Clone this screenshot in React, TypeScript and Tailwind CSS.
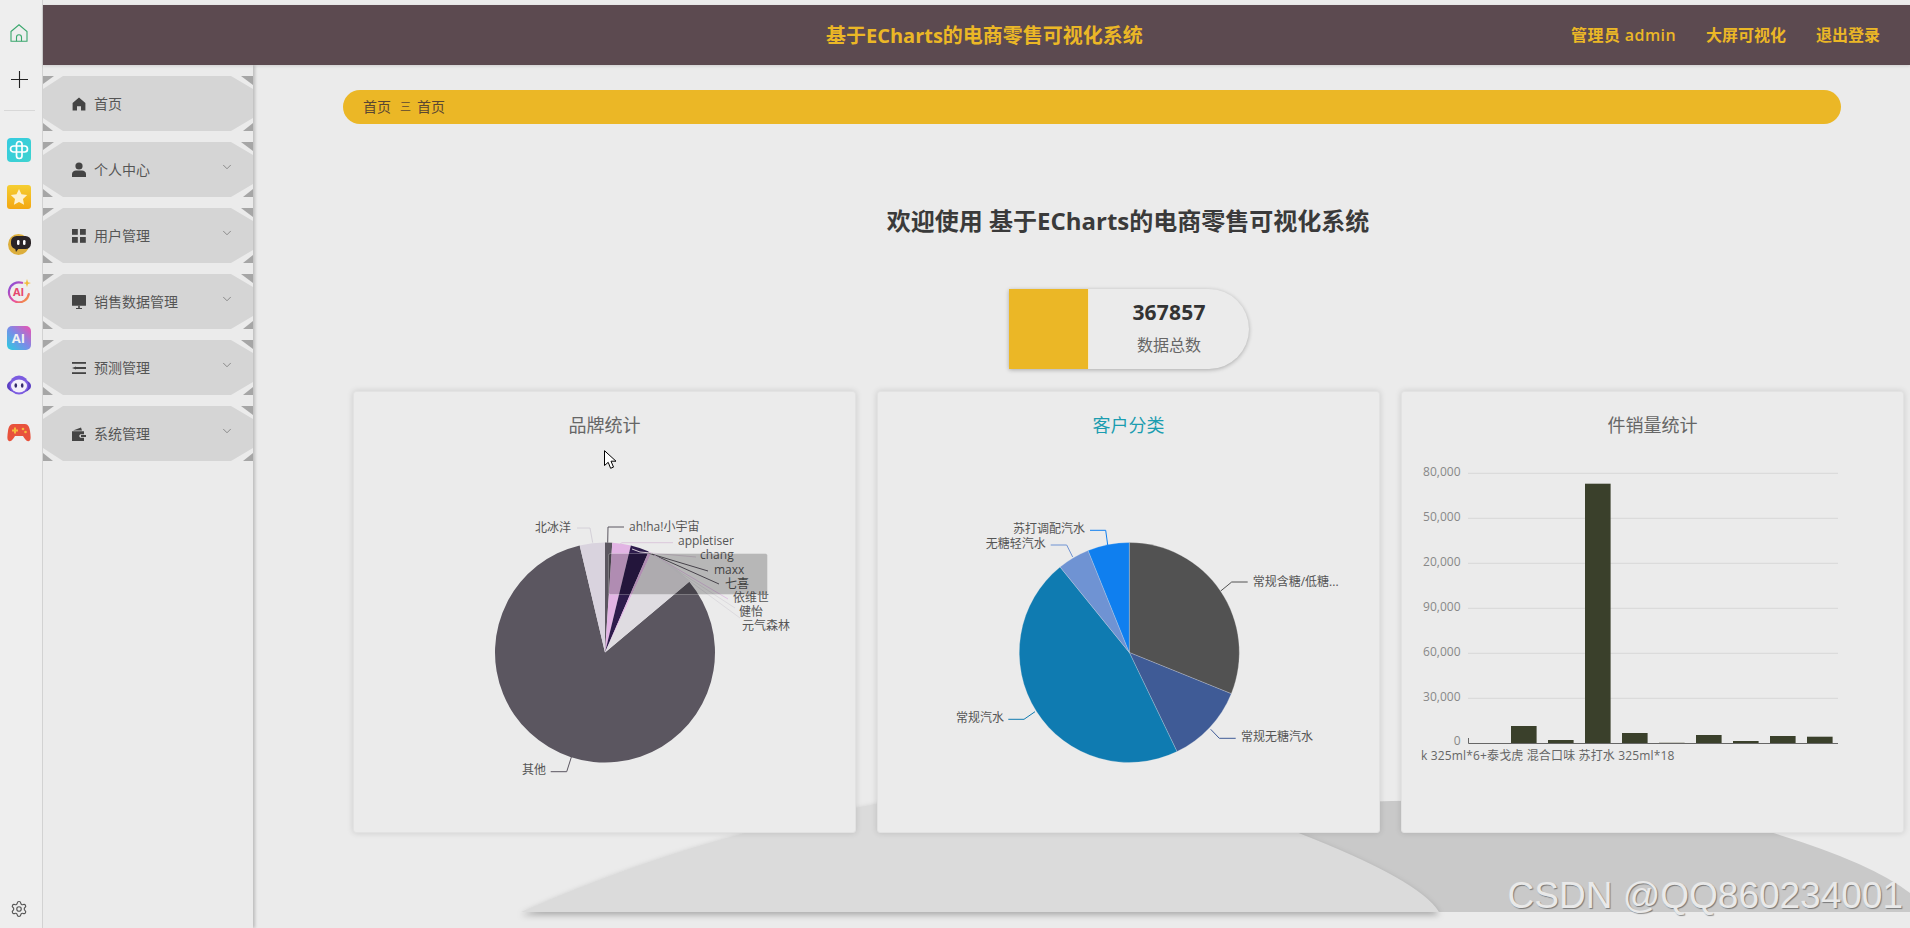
import { ChevronDown, Settings } from "lucide-react"

const yellow = "#ebb726"

// clockwise degrees from 12 o'clock
function slice(cx: number, cy: number, r: number, from: number, to: number) {
  const p = (a: number) => {
    const t = (a * Math.PI) / 180
    return `${(cx + r * Math.sin(t)).toFixed(2)} ${(cy - r * Math.cos(t)).toFixed(2)}`
  }
  const large = to - from > 180 ? 1 : 0
  return `M${cx} ${cy} L${p(from)} A${r} ${r} 0 ${large} 1 ${p(to)} Z`
}

function HomeIcon() {
  return (
    <svg width="14" height="14" viewBox="0 0 14 14" fill="#444">
      <path d="M7 .6 13.4 6v7.4H9V9.2H5v4.2H.6V6z" />
    </svg>
  )
}
function UserIcon() {
  return (
    <svg width="14" height="15" viewBox="0 0 14 15" fill="#444">
      <circle cx="7" cy="4" r="3.6" />
      <path d="M0 15v-3c0-2 2-3.5 4-3.5h6c2 0 4 1.5 4 3.5v3z" />
    </svg>
  )
}
function GridIcon() {
  return (
    <svg width="14" height="14" viewBox="0 0 14 14" fill="#444">
      <rect x="0" y="0" width="5.8" height="5.8" />
      <rect x="8" y="0" width="5.8" height="5.8" />
      <rect x="0" y="8" width="5.8" height="5.8" />
      <rect x="8" y="8" width="5.8" height="5.8" />
    </svg>
  )
}
function MonitorIcon() {
  return (
    <svg width="14" height="14" viewBox="0 0 14 14" fill="#444">
      <rect x="0" y="0" width="14" height="10.8" rx=".5" />
      <path d="M4 13h6v.9H4zM6.2 10.8h1.6V13H6.2z" />
    </svg>
  )
}
function ListIcon() {
  return (
    <svg width="14" height="12" viewBox="0 0 14 12" fill="#444">
      <rect x="0" y="0" width="14" height="1.8" />
      <path d="M0 6 4 4.600V5.100h10v1.800H4v.5z" />
      <rect x="0" y="10.200" width="14" height="1.800" />
    </svg>
  )
}
function WalletIcon() {
  return (
    <svg width="14" height="14" viewBox="0 0 14 14" fill="#444">
      <path d="M1 3.600 9 .6l1 3H1zM0 4.200h12v3H8.400a2 2 0 0 0 0 3.600H12V14H0z" />
      <rect x="9" y="8" width="5" height="2" />
    </svg>
  )
}

const menu = [
  { label: "首页", icon: <HomeIcon />, arrow: false },
  { label: "个人中心", icon: <UserIcon />, arrow: true },
  { label: "用户管理", icon: <GridIcon />, arrow: true },
  { label: "销售数据管理", icon: <MonitorIcon />, arrow: true },
  { label: "预测管理", icon: <ListIcon />, arrow: true },
  { label: "系统管理", icon: <WalletIcon />, arrow: true },
]

function MenuItem({ item }: { item: (typeof menu)[number] }) {
  return (
    <div className="relative h-[55px] w-[210px]">
      <span className="absolute left-0 top-0 h-[8px] w-[11px] bg-[#a6a6a6] [clip-path:polygon(0_0,100%_0,0_100%)]" />
      <span className="absolute right-0 top-0 h-[9px] w-[12px] bg-[#a6a6a6] [clip-path:polygon(0_0,100%_0,100%_100%)]" />
      <span className="absolute bottom-0 left-0 h-[8px] w-[10px] bg-[#a6a6a6] [clip-path:polygon(0_0,100%_100%,0_100%)]" />
      <span className="absolute bottom-0 right-0 h-[8px] w-[10px] bg-[#a6a6a6] [clip-path:polygon(100%_0,100%_100%,0_100%)]" />
      <div className="flex h-full items-center bg-[#d5d5d5] pl-[29px] pr-[19px] text-sm text-[#555] [clip-path:polygon(20px_0,188px_0,210px_13px,210px_42px,188px_55px,20px_55px,0_42px,0_13px)]">
        <span className="flex w-[22px] shrink-0 items-center">{item.icon}</span>
        <span>{item.label}</span>
        {item.arrow && <ChevronDown size={14} strokeWidth={1} className="ml-auto -mt-[5px] text-[#555]" />}
      </div>
    </div>
  )
}

function RailIcons() {
  return (
    <>
      <svg width="24" height="24" viewBox="0 0 24 24">
        <defs>
          <linearGradient id="a1" x1="0" y1="0" x2="1" y2="1">
            <stop offset="0" stopColor="#35cbe0" />
            <stop offset="1" stopColor="#3ed3cf" />
          </linearGradient>
        </defs>
        <rect width="24" height="24" rx="4" fill="url(#a1)" />
        <g fill="none" stroke="#fff" strokeWidth="1.7">
          <rect x="3.5" y="8" width="17" height="6" rx="3" />
          <rect x="9.5" y="3.5" width="5.5" height="17" rx="2.7" />
        </g>
      </svg>
      <svg width="24" height="24" viewBox="0 0 24 24">
        <defs>
          <linearGradient id="a2" x1="0" y1="0" x2="0" y2="1">
            <stop offset="0" stopColor="#f5ce32" />
            <stop offset="1" stopColor="#f3a712" />
          </linearGradient>
        </defs>
        <rect width="24" height="24" rx="3" fill="url(#a2)" />
        <path d="m12 4 2.5 5.3 5.7.7-4.200 4 1.100 5.800-5.100-2.900-5.100 2.900L8 14 3.800 10l5.700-.7z" fill="#fdf1cf" />
      </svg>
      <svg width="24" height="24" viewBox="0 0 24 24">
        <circle cx="11.500" cy="12.500" r="10.500" fill="#dcae3c" />
        <rect x="4" y="4" width="20" height="13" rx="5.500" fill="#2b2527" />
        <path d="m8 16 4 0-3 4z" fill="#2b2527" />
        <rect x="10" y="8" width="2.500" height="5" rx="1.200" fill="#fff" />
        <rect x="16" y="8" width="2.500" height="5" rx="1.200" fill="#fff" />
      </svg>
      <svg width="24" height="24" viewBox="0 0 24 24">
        <defs>
          <linearGradient id="a4" x1="0" y1="0" x2="1" y2="1">
            <stop offset="0" stopColor="#7c4fe0" />
            <stop offset=".6" stopColor="#ea4fa0" />
            <stop offset="1" stopColor="#f5a623" />
          </linearGradient>
        </defs>
        <path d="M15 3.800A10 10 0 1 0 21.800 15" fill="none" stroke="url(#a4)" strokeWidth="2.200" strokeLinecap="round" />
        <text x="11.500" y="16.500" textAnchor="middle" fontSize="11" fontWeight="700" fill="#e6476f">AI</text>
        <path d="m20 0 1 3.200L24 4l-3 .9-1 3.100-1-3.100L16 4l3-.8z" fill="#f3bb3a" />
      </svg>
      <svg width="24" height="24" viewBox="0 0 24 24">
        <defs>
          <linearGradient id="a5" x1="1" y1="0" x2="0" y2="1">
            <stop offset="0" stopColor="#ef4fb0" />
            <stop offset=".5" stopColor="#7a8ce8" />
            <stop offset="1" stopColor="#27cfe0" />
          </linearGradient>
        </defs>
        <rect width="24" height="24" rx="5" fill="url(#a5)" />
        <text x="11.500" y="17" textAnchor="middle" fontSize="13" fontWeight="700" fill="#f2f2f2">AI</text>
      </svg>
      <svg width="24" height="24" viewBox="0 0 24 24">
        <ellipse cx="12" cy="13" rx="12" ry="7" fill="#5b3fc4" />
        <circle cx="12" cy="12" r="9.500" fill="#7c5ce0" />
        <ellipse cx="12" cy="13" rx="8" ry="6.500" fill="#f3effa" />
        <ellipse cx="8.800" cy="12.500" rx="1.300" ry="2.200" fill="#34296b" />
        <ellipse cx="15.200" cy="12.500" rx="1.300" ry="2.200" fill="#34296b" />
      </svg>
      <svg width="24" height="24" viewBox="0 0 24 24">
        <path d="M6 4h12c3 0 4.500 3 5 7s1.500 9-1 10-4-2-6-5H8c-2 3-3.500 6-6 5s-1.500-6-1-10 2-7 5-7z" fill="#e8523c" />
        <path d="M5 9.500h2V7.500h2v2h2v2H9v2H7v-2H5z" fill="#f6b93b" />
        <circle cx="16" cy="9" r="1.300" fill="#f6b93b" />
        <circle cx="18.500" cy="12" r="1.300" fill="#f6b93b" />
      </svg>
    </>
  )
}

function Card({ title, active, children }: { title: string; active?: boolean; children: React.ReactNode }) {
  return (
    <div className="flex h-[442px] w-[503px] flex-col rounded-[3px] border border-[#e2e2e2] bg-[#ebebeb] shadow-[0_0_6px_rgba(0,0,0,0.14)]">
      <div className={`pt-[20px] text-center text-[18px] leading-[26px] ${active ? "text-[#1b9db0]" : "text-[#666]"}`}>{title}</div>
      {children}
    </div>
  )
}

const brandLabels: { text: string; x: number; y: number; line: string; color: string }[] = [
  { text: "北冰洋", x: 535, y: 527, line: "577,527 590,527 592.7,541.7", color: "#d4d0d8" },
  { text: "ah!ha!小宇宙", x: 629, y: 526, line: "624,526 608,526 607.7,541.7", color: "#5b5660" },
  { text: "appletiser", x: 678, y: 540, line: "673,541.7 622,541.7 620,543", color: "#dcc8dc" },
  { text: "chang", x: 700, y: 554, line: "696,556 640,551 632,548", color: "#d8cdd8" },
  { text: "maxx", x: 714, y: 569, line: "708,570 648,552", color: "#5b5660" },
  { text: "七喜", x: 725, y: 583, line: "719,583 652,553", color: "#5b5660" },
  { text: "依维世", x: 733, y: 597, line: "728,598 654,554", color: "#e0c4e4" },
  { text: "健怡", x: 739, y: 611, line: "735,607 655,555", color: "#dcdade" },
  { text: "元气森林", x: 742, y: 625, line: "740,617 657,556", color: "#dcdade" },
  { text: "其他", x: 522, y: 769, line: "550.7,770.7 566.7,770.7 571.7,755", color: "#5b5660" },
]

function BrandPie() {
  const c = [605, 651.5, 110] as const
  return (
    <svg className="block" width="501" height="393" viewBox="354 437 501 393" fontSize="12">
      <path d={slice(c[0], c[1], c[2], 50, 346.7)} fill="#5b5660" />
      <path d={slice(c[0], c[1], c[2], 346.7, 360)} fill="#d9d3de" />
      <path d={slice(c[0], c[1], c[2], 0, 3.8)} fill="#5b5660" />
      <path d={slice(c[0], c[1], c[2], 3.8, 13.6)} fill="#e2b4e4" />
      <path d={slice(c[0], c[1], c[2], 13.6, 23.4)} fill="#2e1c4c" />
      <path d={slice(c[0], c[1], c[2], 23.4, 25)} fill="#e2b4e4" />
      <path d={slice(c[0], c[1], c[2], 25, 50)} fill="#dfdce1" />
      {brandLabels.map((l) => (
        <g key={l.text}>
          <polyline points={l.line} fill="none" stroke={l.color} />
          <text x={l.x} y={l.y + 4} fill="#555">{l.text}</text>
        </g>
      ))}
      <rect x="608.500" y="552.500" width="159" height="41" rx="2" fill="rgba(0,0,0,0.22)" stroke="rgba(255,255,255,0.25)" />
    </svg>
  )
}

const kindSlices = [
  { from: 0, to: 112, color: "#525252" },
  { from: 112, to: 154.3, color: "#3f5b96" },
  { from: 154.3, to: 321, color: "#0f7bb1" },
  { from: 321, to: 338, color: "#6f93d3" },
  { from: 338, to: 360, color: "#0f7fef" },
]
const kindLabels = [
  { text: "常规含糖/低糖...", x: 1252.7, y: 581, line: "1220.7,590 1231.7,581 1247.7,581", color: "#525252" },
  { text: "常规无糖汽水", x: 1241, y: 736, line: "1210.7,728.3 1219.3,737.3 1235.7,737.3", color: "#3f5b96" },
  { text: "常规汽水", x: 956, y: 717, line: "1035,710.7 1024,718.3 1008.3,718.3", color: "#0f7bb1" },
  { text: "无糖轻汽水", x: 985.7, y: 543, line: "1072.7,556 1066.7,544 1050.7,544", color: "#6f93d3" },
  { text: "苏打调配汽水", x: 1013, y: 528, line: "1107.7,544 1105.7,529.3 1090,529.3", color: "#0f7fef" },
]

function KindPie() {
  return (
    <svg className="block" width="501" height="393" viewBox="878 437 501 393" fontSize="12" overflow="visible">
      {kindSlices.map((s) => (
        <path key={s.from} d={slice(1129.3, 651.5, 110, s.from, s.to)} fill={s.color} stroke="#ebebeb" strokeWidth="0.25" />
      ))}
      {kindLabels.map((l) => (
        <g key={l.text}>
          <polyline points={l.line} fill="none" stroke={l.color} />
          <text x={l.x} y={l.y + 4} fill="#555">{l.text}</text>
        </g>
      ))}
    </svg>
  )
}

const ticks = [
  { label: "80,000", y: 472.3 },
  { label: "50,000", y: 517.3 },
  { label: "20,000", y: 562.3 },
  { label: "90,000", y: 607.3 },
  { label: "60,000", y: 652.3 },
  { label: "30,000", y: 697.3 },
]
const barTops = [742, 725, 739, 482.7, 732, 741, 734, 740, 735, 735.7]

function SalesBars() {
  return (
    <svg className="block" width="501" height="393" viewBox="1402 437 501 393" fontSize="12" overflow="visible">
      {ticks.map((t) => (
        <g key={t.label}>
          <line x1="1468" x2="1838" y1={t.y} y2={t.y} stroke="#d8d8d8" />
          <text x="1460.500" y={t.y + 3} textAnchor="end" fill="#888">{t.label}</text>
        </g>
      ))}
      {barTops.map((top, i) => (
        <rect key={i} x={1474 + i * 37} y={top} width="25.600" height={742 - top} fill={i === 5 ? "#c4c4bc" : "#3a402b"} />
      ))}
      <path d="M1468.500 737V742.500H1838" fill="none" stroke="#666" />
      <text x="1460.500" y="744" textAnchor="end" fill="#888">0</text>
      <text x="1421" y="759" fill="#666" letterSpacing="0.15">k 325ml*6+泰戈虎 混合口味 苏打水 325ml*18</text>
    </svg>
  )
}

export default function App() {
  return (
    <div className="relative flex h-screen w-full overflow-hidden bg-[#ebebeb] font-['Open_Sans','Noto_Sans_CJK_SC',sans-serif]">
      {/* app rail */}
      <aside className="z-20 flex w-[43px] shrink-0 flex-col items-center border-r border-[#d2d2d2] bg-[#eeeeee] pr-[4px] pt-[24px] pb-[10px]">
        <svg width="18" height="18" viewBox="0 0 18 18" fill="none" stroke="#3aa76d" strokeWidth="1.100">
          <path d="M1 7.500 9 .8l8 6.700v9.700H1z" />
          <path d="M6.500 17.200v-4a2.500 2.500 0 0 1 5 0v4" />
        </svg>
        <svg className="mt-[29px]" width="17" height="17" viewBox="0 0 17 17" stroke="#222" strokeWidth="1.100">
          <path d="M0 8.500h17M8.500 0v17" />
        </svg>
        <div className="mt-[22px] h-px w-[31px] bg-[#d8d8d8]" />
        <div className="mt-[27px] flex flex-col gap-[23px]">
          <RailIcons />
        </div>
        <Settings size={18} strokeWidth={1.500} className="mt-auto text-[#555]" />
      </aside>

      <div className="flex min-w-0 flex-1 flex-col pt-[5px]">
        <header className="z-20 flex h-[60px] shrink-0 items-center bg-[#5c4a50] pr-[30px] shadow-[0_1px_3px_rgba(0,0,0,0.12)]" style={{ color: yellow }}>
          <div className="ml-[783px] mt-[2px] text-[20px] font-bold">基于ECharts的电商零售可视化系统</div>
          <div className="ml-auto flex gap-[30px] text-base font-semibold">
            <span className="tracking-[0.4px]">管理员 admin</span>
            <span>大屏可视化</span>
            <span>退出登录</span>
          </div>
        </header>

        <div className="flex min-h-0 flex-1">
          <nav className="z-10 flex w-[210px] shrink-0 flex-col gap-[11px] bg-[#ebebeb] pt-[11px] shadow-[2px_0_3px_rgba(0,0,0,0.2)]">
            {menu.map((item) => (
              <MenuItem key={item.label} item={item} />
            ))}
          </nav>

          <main className="relative min-w-0 flex-1 pl-[100px] pr-[7px]">
            {/* backdrop blobs behind the cards */}
            <svg className="absolute left-0 top-0 h-[863px] w-[1657px]" viewBox="253 65 1657 863">
              <path d="M1100 912V830Q1440 770 1770 832Q1870 862 1910 893V912Z" fill="#c9c9c9" />
              <g className="drop-shadow-[0_3px_3px_rgba(0,0,0,0.28)]">
                <path d="M521 912Q640 860 749 832Q900 795 1000 785Q1170 780 1296 832Q1420 880 1439 912Z" fill="#dbdbdb" />
              </g>
            </svg>

            <div className="relative">
              <div className="ml-[-10px] mr-[62px] mt-[25px] flex h-[34px] items-center rounded-full pl-[20px] text-sm text-[#5a4632]" style={{ backgroundColor: yellow }}>
                <span>首页</span>
                <span className="ml-[9px] mr-[6px] text-[11px]">三</span>
                <span>首页</span>
              </div>

              <h1 className="mt-[79px] h-[36px] text-center text-2xl font-bold leading-[36px] text-[#3a3a3a]">欢迎使用 基于ECharts的电商零售可视化系统</h1>

              <div className="mt-[50px] flex justify-center pl-[2px]">
                <div className="flex h-[80px] w-[240px] overflow-hidden rounded-r-[40px] bg-[#ebebeb] shadow-[0_1px_4px_rgba(0,0,0,0.28)]">
                  <div className="h-full w-[80px] border-r border-[#f5ead0]" style={{ backgroundColor: yellow }} />
                  <div className="flex flex-1 flex-col items-center pt-[8px]">
                    <div className="text-[21px] font-bold leading-[30px] tracking-[0.2px] text-[#333]">367857</div>
                    <div className="mt-[4px] text-base leading-[28px] text-[#666]">数据总数</div>
                  </div>
                </div>
              </div>

              <div className="mt-[22px] grid grid-cols-[503px_503px_503px] gap-x-[21px]">
                <Card title="品牌统计"><BrandPie /></Card>
                <Card title="客户分类" active><KindPie /></Card>
                <Card title="件销量统计"><SalesBars /></Card>
              </div>
            </div>
          </main>
        </div>
      </div>

      {/* mouse pointer caught in the shot */}
      <svg className="absolute left-[604px] top-[450px] z-30" width="13" height="20" viewBox="0 0 13 20">
        <path d="M.5.700V15.500l3.700-3.200 2.400 6 2.900-1.200-2.500-5.900h5z" fill="#fff" stroke="#000" />
      </svg>

      {/* image watermark */}
      <div className="absolute bottom-[12px] right-[7px] z-30 text-[37px] leading-[40px] text-[#e9e9e9] [font-family:'Liberation_Sans',sans-serif] [text-shadow:1px_1px_1px_rgba(0,0,0,0.4)]">CSDN @QQ860234001</div>
    </div>
  )
}
